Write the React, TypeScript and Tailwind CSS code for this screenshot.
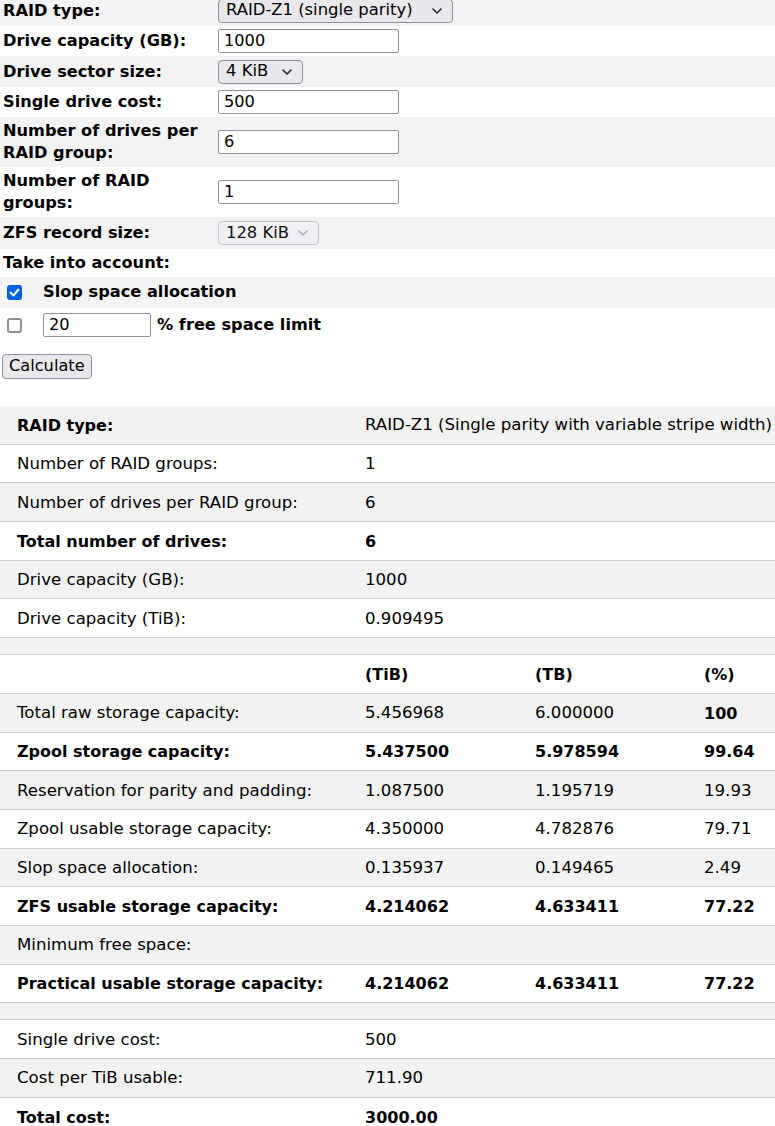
import type { ReactNode } from 'react';

const font = { fontFamily: '"DejaVu Sans", Verdana, sans-serif' };

function Chevron({ light }: { light?: boolean }) {
  return (
    <svg width="10" height="6" viewBox="0 0 10 6" className="ml-auto shrink-0">
      <path
        d="M1 1l4 4 4-4"
        fill="none"
        stroke={light ? '#a8a8b0' : '#222'}
        strokeWidth="1.6"
        strokeLinecap="round"
        strokeLinejoin="round"
      />
    </svg>
  );
}

function Select({ value, width, disabled }: { value: string; width: string; disabled?: boolean }) {
  return (
    <div
      className={`flex items-center h-[24px] pl-[7px] pr-[10px] rounded-[4px] border text-[16.4px] ${width} ${
        disabled ? 'bg-[#f0f0f4] border-[#c4c4cc] text-[#111]' : 'bg-[#e9e9ed] border-[#8f8f9d] text-black'
      }`}
    >
      <span className="whitespace-nowrap">{value}</span>
      <Chevron light={disabled} />
    </div>
  );
}

function Input({ value, width }: { value: string; width: string }) {
  return (
    <div className={`flex items-center h-[24px] px-[5px] rounded-[2px] border border-[#8f8f9d] bg-white text-[16.2px] ${width}`}>
      {value}
    </div>
  );
}

function Checkbox({ checked }: { checked?: boolean }) {
  if (checked) {
    return (
      <div className="w-[15px] h-[15px] rounded-[3px] bg-[#0060df] flex items-center justify-center">
        <svg width="11" height="9" viewBox="0 0 11 9">
          <path d="M1.5 4.5l3 3 5-6" fill="none" stroke="white" strokeWidth="2" strokeLinecap="round" strokeLinejoin="round" />
        </svg>
      </div>
    );
  }
  return <div className="w-[15px] h-[15px] rounded-[3px] border-2 border-[#8f8f9d] bg-white" />;
}

function FormRow({ label, h, gray, children }: { label: ReactNode; h: string; gray?: boolean; children?: ReactNode }) {
  return (
    <div className={`flex items-center ${h} ${gray ? 'bg-[#f3f3f3]' : ''}`}>
      <div className="w-[215px] pl-[3px] pr-[6px] font-bold leading-[22px]">{label}</div>
      <div className="pl-[3px]">{children}</div>
    </div>
  );
}

type TRow = { cells: string[]; bold?: number[]; span?: boolean; sep?: boolean };

const results: TRow[] = [
  { cells: ['RAID type:', 'RAID-Z1 (Single parity with variable stripe width)'], bold: [0], span: true },
  { cells: ['Number of RAID groups:', '1'] },
  { cells: ['Number of drives per RAID group:', '6'] },
  { cells: ['Total number of drives:', '6'], bold: [0, 1] },
  { cells: ['Drive capacity (GB):', '1000'] },
  { cells: ['Drive capacity (TiB):', '0.909495'] },
  { cells: [], sep: true },
  { cells: ['', '(TiB)', '(TB)', '(%)'], bold: [1, 2, 3] },
  { cells: ['Total raw storage capacity:', '5.456968', '6.000000', '100'], bold: [3] },
  { cells: ['Zpool storage capacity:', '5.437500', '5.978594', '99.64'], bold: [0, 1, 2, 3] },
  { cells: ['Reservation for parity and padding:', '1.087500', '1.195719', '19.93'] },
  { cells: ['Zpool usable storage capacity:', '4.350000', '4.782876', '79.71'] },
  { cells: ['Slop space allocation:', '0.135937', '0.149465', '2.49'] },
  { cells: ['ZFS usable storage capacity:', '4.214062', '4.633411', '77.22'], bold: [0, 1, 2, 3] },
  { cells: ['Minimum free space:'] },
  { cells: ['Practical usable storage capacity:', '4.214062', '4.633411', '77.22'], bold: [0, 1, 2, 3] },
  { cells: [], sep: true },
  { cells: ['Single drive cost:', '500'] },
  { cells: ['Cost per TiB usable:', '711.90'] },
  { cells: ['Total cost:', '3000.00'], bold: [0, 1] },
];

export default function App() {
  return (
    <div className="w-[775px] min-h-[1126px] bg-white text-black text-[16.2px] overflow-hidden" style={font}>
      <div className="-mt-[5px]">
        <FormRow label="RAID type:" h="h-[31px]" gray>
          <Select value="RAID-Z1 (single parity)" width="w-[235px]" />
        </FormRow>
        <FormRow label="Drive capacity (GB):" h="h-[30px]">
          <Input value="1000" width="w-[181px]" />
        </FormRow>
        <FormRow label="Drive sector size:" h="h-[31px]" gray>
          <Select value="4 KiB" width="w-[85px]" />
        </FormRow>
        <FormRow label="Single drive cost:" h="h-[30px]">
          <Input value="500" width="w-[181px]" />
        </FormRow>
        <FormRow label="Number of drives per RAID group:" h="h-[50px]" gray>
          <Input value="6" width="w-[181px]" />
        </FormRow>
        <FormRow label="Number of RAID groups:" h="h-[50px]">
          <Input value="1" width="w-[181px]" />
        </FormRow>
        <FormRow label="ZFS record size:" h="h-[32px]" gray>
          <Select value="128 KiB" width="w-[101px]" disabled />
        </FormRow>
        <div className="h-[28px] flex items-center pl-[3px] font-bold">Take into account:</div>
        <div className="h-[31px] flex items-center bg-[#f3f3f3]">
          <div className="w-[43px] pl-[7px]">
            <Checkbox checked />
          </div>
          <span className="font-bold">Slop space allocation</span>
        </div>
        <div className="h-[34px] flex items-center">
          <div className="w-[43px] pl-[7px]">
            <Checkbox />
          </div>
          <Input value="20" width="w-[108px]" />
          <span className="font-bold ml-[6px]">% free space limit</span>
        </div>
      </div>

      <div className="mt-[12px] ml-[2px] inline-flex items-center h-[25px] px-[6px] rounded-[4px] border border-[#8f8f9d] bg-[#e9e9ed]">
        Calculate
      </div>

      <div className="mt-[27px] text-[16.6px]">
        {results.map((r, i) => (
          <div
            key={i}
            className={`border-b border-[#cccccc] ${i % 2 === 0 ? 'bg-[#f2f2f2]' : 'bg-white'} ${
              r.sep ? 'h-[17px]' : 'h-[38.7px] grid grid-cols-[348px_170px_169px_1fr] items-center pl-[17px] pt-[2px]'
            }`}
          >
            {!r.sep &&
              r.cells.map((c, j) => (
                <div
                  key={j}
                  className={`whitespace-nowrap ${r.bold?.includes(j) ? 'font-bold text-[16px]' : ''} ${
                    r.span && j === 1 ? 'col-span-3' : ''
                  }`}
                >
                  {c}
                </div>
              ))}
          </div>
        ))}
      </div>
    </div>
  );
}
